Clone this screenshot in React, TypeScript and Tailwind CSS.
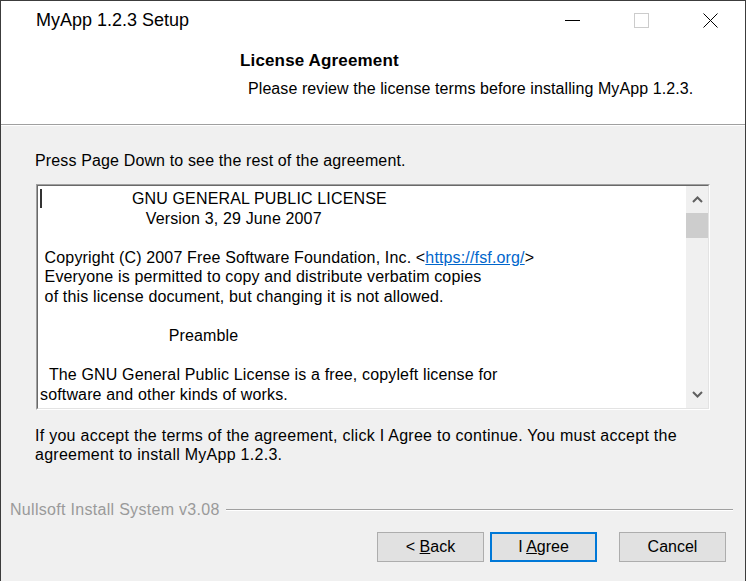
import React from "react";

const licenseLines: React.ReactNode[] = [
  "                    GNU GENERAL PUBLIC LICENSE",
  "                       Version 3, 29 June 2007",
  "",
  <>
    {" Copyright (C) 2007 Free Software Foundation, Inc. <"}
    <span className="text-[#0066cc] underline">https://fsf.org/</span>
    {">"}
  </>,
  " Everyone is permitted to copy and distribute verbatim copies",
  " of this license document, but changing it is not allowed.",
  "",
  "                            Preamble",
  "",
  "  The GNU General Public License is a free, copyleft license for",
  "software and other kinds of works.",
];

const Chevron: React.FC<{ down?: boolean }> = ({ down }) => (
  <svg width="11" height="7" viewBox="0 0 11 7">
    <polyline
      points={down ? "1,1 5.5,5.5 10,1" : "1,6 5.5,1.5 10,6"}
      fill="none"
      stroke="#606060"
      strokeWidth="2"
    />
  </svg>
);

const Button: React.FC<{ focused?: boolean; children: React.ReactNode }> = ({ focused, children }) => (
  <div
    className={
      "w-[107px] h-[30px] flex items-center justify-center bg-[#e1e1e1] text-[16px] text-black " +
      (focused ? "border-2 border-[#0078d7]" : "border border-[#adadad]")
    }
  >
    <span className="whitespace-pre">{children}</span>
  </div>
);

export default function App() {
  return (
    <div className="w-[747px] h-[581px] bg-white overflow-hidden font-['Liberation_Sans',Arial,sans-serif]">
      <div className="w-[746px] h-[581px] border-l border-t border-r border-[#3c3c3c] flex flex-col">
        {/* title bar */}
        <div className="h-[38px] flex items-center bg-white shrink-0">
          <div className="pl-[35px] text-[18px] leading-[22px] text-black flex-1">MyApp 1.2.3 Setup</div>
          <div className="flex h-full">
            <div className="w-[69px] h-full flex items-center justify-center">
              <div className="w-[15px] h-[1px] bg-black" />
            </div>
            <div className="w-[69px] h-full flex items-center justify-center">
              <div className="w-[15px] h-[15px] border border-[#cccccc]" />
            </div>
            <div className="w-[69px] h-full flex items-center justify-center">
              <svg width="15" height="15" viewBox="0 0 15 15">
                <path d="M0.5 0.5 L14.5 14.5 M14.5 0.5 L0.5 14.5" stroke="#000" strokeWidth="1" />
              </svg>
            </div>
          </div>
        </div>

        {/* header */}
        <div className="h-[85px] bg-white shrink-0 pt-[12px]">
          <div className="pl-[239px] text-[17px] leading-[20px] font-bold text-black tracking-[0.15px]">License Agreement</div>
          <div className="pl-[247px] mt-[8px] text-[16px] leading-[19px] text-black tracking-[0.08px]">
            Please review the license terms before installing MyApp 1.2.3.
          </div>
        </div>
        <div className="h-[1px] bg-[#a0a0a0] shrink-0" />
        <div className="h-[1px] bg-white shrink-0" />

        {/* body */}
        <div className="flex-1 bg-[#f0f0f0] flex flex-col">
          <div className="pl-[34px] mt-[25px] text-[16px] leading-[19px] text-black tracking-[0.14px]">
            Press Page Down to see the rest of the agreement.
          </div>

          <div className="ml-[35px] mt-[14px] w-[674px] h-[226px] border border-t-[#a0a0a0] border-l-[#a0a0a0] border-b-white border-r-white">
            <div className="w-full h-full border border-t-[#696969] border-l-[#696969] border-b-[#e3e3e3] border-r-[#e3e3e3] flex bg-white">
              <div className="relative flex-1 pl-[2px] pt-[3px] overflow-hidden">
                <div className="absolute left-[2px] top-[3px] w-[2px] h-[19px] bg-[#333]" />
                {licenseLines.map((line, i) => (
                  <div key={i} className="whitespace-pre text-[16px] leading-[19.6px] h-[19.6px] text-black tracking-[0.15px]">
                    {line}
                  </div>
                ))}
              </div>
              <div className="w-[22px] bg-[#f0f0f0] flex flex-col">
                <div className="h-[27px] flex items-center justify-center">
                  <Chevron />
                </div>
                <div className="h-[25px] bg-[#cdcdcd]" />
                <div className="flex-1" />
                <div className="h-[27px] flex items-center justify-center">
                  <Chevron down />
                </div>
              </div>
            </div>
          </div>

          <div className="pl-[34px] mt-[16px] text-[16px] leading-[19px] text-black tracking-[0.27px] whitespace-nowrap">
            If you accept the terms of the agreement, click I Agree to continue. You must accept the
            <br />
            agreement to install MyApp 1.2.3.
          </div>

          <div className="mt-[36px] h-[19px] flex items-center pl-[9px] pr-[12px]">
            <span className="text-[16px] leading-[19px] text-[#9a9a9a] whitespace-nowrap tracking-[0.3px]">Nullsoft Install System v3.08</span>
            <div className="flex-1 ml-[6px] flex flex-col">
              <div className="h-[1px] bg-[#a0a0a0]" />
              <div className="h-[1px] bg-white" />
            </div>
          </div>

          <div className="mt-[13px] flex justify-end pr-[19px]">
            <Button>
              {"< "}
              <span className="underline">B</span>ack
            </Button>
            <div className="w-[6px]" />
            <Button focused>
              {"I "}
              <span className="underline">A</span>gree
            </Button>
            <div className="w-[22px]" />
            <Button>Cancel</Button>
          </div>
        </div>
      </div>
    </div>
  );
}
